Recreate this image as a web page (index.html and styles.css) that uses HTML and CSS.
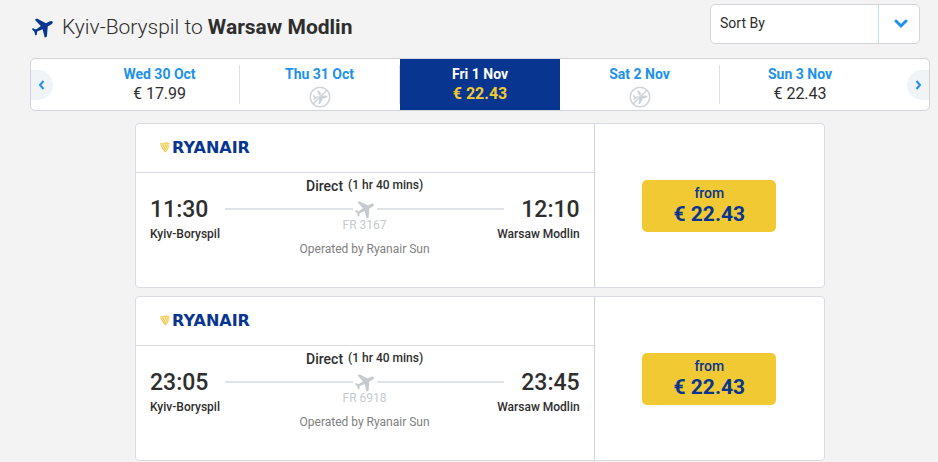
FILE: index.html
```html
<!DOCTYPE html>
<html lang="en">
<head>
    <meta charset="UTF-8">
    <meta name="viewport" content="width=device-width, initial-scale=1.0">
    <title>Kyiv-Boryspil to Warsaw Modlin</title>
    <link rel="stylesheet" href="styles.css">
</head>
<body>
    <svg width="0" height="0" class="sprite" aria-hidden="true">
        <symbol id="plane" viewBox="0 0 24 24">
            <path transform="rotate(61 12 12)" d="M12 0c-1.200 0-2 1.400-2 3v4.200L.8 13.300V16l9.200-2.400.7 6.400-2.800 2v1.800l4.100-1 4.100 1V22l-2.800-2 .7-6.400 9.200 2.400v-2.700L14 7.200V3C14 1.400 13.200 0 12 0z"/>
        </symbol>
        <symbol id="no-flight" viewBox="0 0 22 22">
            <circle cx="11" cy="11" r="9.800" fill="none" stroke="currentColor" stroke-width="1.500"/>
            <path transform="translate(4 4) scale(.6) rotate(85 12 12)" d="M12 0c-1.200 0-2 1.400-2 3v4.200L.8 13.300V16l9.200-2.400.7 6.400-2.800 2v1.800l4.100-1 4.100 1V22l-2.800-2 .7-6.400 9.200 2.400v-2.700L14 7.200V3C14 1.400 13.200 0 12 0z" fill="currentColor"/>
            <path d="M4 16.500 16.500 4" stroke="#fff" stroke-width="1"/>
            <path d="M4 18 18 4" stroke="currentColor" stroke-width="1.500"/>
        </symbol>
        <symbol id="harp" viewBox="0 0 10 11">
            <path d="M.2 1.500C2.500 2 4 .2 6 .5s2.400.3 3.800 1.200C9.800 4.500 7.800 8 5.400 10.700 3 8 .6 5 .2 1.500z" fill="#fae9a6"/>
            <path d="M.4 1.600C3 3 4 .8 6 1s2.200.3 3.500.9M.8 3.200l4.500 6.900 3-4.300M2.800 3.200l3 5.200M5 2.400l2.200 4M7.300 2.600l1 2" fill="none" stroke="#ebc03a" stroke-width=".9"/>
        </symbol>
    </svg>

    <main class="page">
        <header class="header">
            <h1 class="title">
                <svg class="title-icon"><use href="#plane"/></svg>
                <span>Kyiv-Boryspil to <strong>Warsaw Modlin</strong></span>
            </h1>
            <div class="sort">
                <select class="sort-select" aria-label="Sort By">
                    <option>Sort By</option>
                    <option>Price</option>
                    <option>Departure time</option>
                </select>
                <span class="sort-arrow">
                    <svg width="14" height="10" viewBox="0 0 14 10"><path d="M2 2l5 5 5-5" fill="none" stroke="currentColor" stroke-width="3" stroke-linecap="round"/></svg>
                </span>
            </div>
        </header>

        <nav class="dates">
            <button class="arrow prev" aria-label="Previous dates">
                <svg width="8" height="10" viewBox="0 0 8 10"><path d="M5.500 1L2 5l3.500 4" fill="none" stroke="currentColor" stroke-width="2"/></svg>
            </button>
            <button class="date"><span class="day">Wed 30 Oct</span><span class="fare">€ 17.99</span></button>
            <button class="date"><span class="day">Thu 31 Oct</span><svg class="no-flight"><use href="#no-flight"/></svg></button>
            <button class="date active"><span class="day">Fri 1 Nov</span><span class="fare">€ 22.43</span></button>
            <button class="date"><span class="day">Sat 2 Nov</span><svg class="no-flight"><use href="#no-flight"/></svg></button>
            <button class="date"><span class="day">Sun 3 Nov</span><span class="fare">€ 22.43</span></button>
            <button class="arrow next" aria-label="Next dates">
                <svg width="8" height="10" viewBox="0 0 8 10"><path d="M2.500 1L6 5 2.500 9" fill="none" stroke="currentColor" stroke-width="2"/></svg>
            </button>
        </nav>

        <section class="flights">
            <article class="flight">
                <div class="info">
                    <div class="carrier"><svg class="harp"><use href="#harp"/></svg><span>RYANAIR</span></div>
                    <div class="route">
                        <div class="stop">
                            <div class="time">11:30</div>
                            <div class="city">Kyiv-Boryspil</div>
                        </div>
                        <div class="path">
                            <div class="direct"><span>Direct</span> <span class="duration">(1 hr 40 mins)</span></div>
                            <div class="line"><svg class="line-icon"><use href="#plane"/></svg></div>
                            <div class="number">FR 3167</div>
                            <div class="operator">Operated by Ryanair Sun</div>
                        </div>
                        <div class="stop arrival">
                            <div class="time">12:10</div>
                            <div class="city">Warsaw Modlin</div>
                        </div>
                    </div>
                </div>
                <div class="buy">
                    <button class="price"><span class="from">from</span><span class="amount">€ 22.43</span></button>
                </div>
            </article>

            <article class="flight">
                <div class="info">
                    <div class="carrier"><svg class="harp"><use href="#harp"/></svg><span>RYANAIR</span></div>
                    <div class="route">
                        <div class="stop">
                            <div class="time">23:05</div>
                            <div class="city">Kyiv-Boryspil</div>
                        </div>
                        <div class="path">
                            <div class="direct"><span>Direct</span> <span class="duration">(1 hr 40 mins)</span></div>
                            <div class="line"><svg class="line-icon"><use href="#plane"/></svg></div>
                            <div class="number">FR 6918</div>
                            <div class="operator">Operated by Ryanair Sun</div>
                        </div>
                        <div class="stop arrival">
                            <div class="time">23:45</div>
                            <div class="city">Warsaw Modlin</div>
                        </div>
                    </div>
                </div>
                <div class="buy">
                    <button class="price"><span class="from">from</span><span class="amount">€ 22.43</span></button>
                </div>
            </article>
        </section>
    </main>
</body>
</html>
```

FILE: styles.css
```css
* {
    box-sizing: border-box;
}

body {
    margin: 0;
    background-color: #f3f3f3;
    color: #2e2e2e;
    font-family: Roboto, Arial, sans-serif;
}

button {
    border: 0;
    padding: 0;
    background: none;
    color: inherit;
    font-family: inherit;
    cursor: pointer;
}

svg {
    flex: none;
}

.sprite {
    display: block;
}

.page {
    padding: 4px 8px 0 30px;
}

/* header */
.header {
    display: flex;
    justify-content: space-between;
    padding: 0 10px 0 2px;
    margin-bottom: 14px;
}

.title {
    display: flex;
    align-items: center;
    gap: 8px;
    margin: 6px 0 0;
    height: 34px;
    font-size: 21px;
    font-weight: 300;
}

.title strong {
    font-weight: 700;
}

.title-icon {
    width: 22px;
    height: 22px;
    fill: #073590;
}

.sort {
    position: relative;
    width: 210px;
    height: 40px;
}

.sort-select {
    appearance: none;
    width: 100%;
    height: 100%;
    padding: 0 50px 2px 9px;
    border: 1px solid #d1d5d9;
    border-radius: 5px;
    background-color: #fff;
    color: #2e2e2e;
    font-family: inherit;
    font-size: 14px;
}

.sort-arrow {
    position: absolute;
    top: 1px;
    right: 1px;
    bottom: 1px;
    display: flex;
    align-items: center;
    justify-content: center;
    width: 41px;
    padding-left: 4px;
    border-left: 1px solid #c5e1f7;
    color: #2091eb;
    pointer-events: none;
}

/* date carousel */
.dates {
    display: grid;
    grid-template-columns: 49px repeat(5, 1fr) 49px;
    align-items: center;
    height: 53px;
    border: 1px solid #d1d5d9;
    border-radius: 5px;
    background-color: #fff;
}

.arrow {
    display: flex;
    align-items: center;
    justify-content: center;
    width: 22px;
    height: 30px;
    background-color: #f1f4f7;
    color: #2091eb;
}

.prev {
    border-radius: 0 15px 15px 0;
}

.next {
    justify-self: end;
    border-radius: 15px 0 0 15px;
}

.date {
    display: flex;
    flex-direction: column;
    align-items: center;
    height: 39px;
    border-right: 1px solid #dde0e3;
}

.date:nth-child(6) {
    border-right: 0;
}

.day {
    color: #2091eb;
    font-size: 14px;
    font-weight: 700;
    line-height: 18px;
}

.fare {
    font-size: 16px;
    line-height: 22px;
}

.no-flight {
    width: 22px;
    height: 22px;
    margin-top: 3px;
    color: #d0d3d6;
}

.active {
    align-self: stretch;
    height: auto;
    padding-top: 6px;
    border-right: 0;
    background-color: #073590;
}

.active .day {
    color: #fff;
}

.active .fare {
    color: #f1c933;
    font-weight: 700;
}

/* flight cards */
.flights {
    display: grid;
    gap: 8px;
    margin: 12px 105px 0;
}

.flight {
    display: grid;
    grid-template-columns: 2fr 1fr;
    min-height: 165px;
    border: 1px solid #d8dce2;
    border-radius: 4px;
    background-color: #fff;
}

.info {
    border-right: 1px solid #d0d4d9;
}

.carrier {
    display: flex;
    align-items: center;
    gap: 2px;
    height: 49px;
    padding: 0 24px 2px;
    border-bottom: 1px solid #d8dce2;
    color: #073590;
    font-family: "DejaVu Sans", sans-serif;
    font-size: 16px;
    font-weight: 700;
}

.harp {
    width: 10px;
    height: 11px;
}

.route {
    display: flex;
    justify-content: space-between;
    padding: 4px 14px 0;
}

.stop {
    padding-top: 19px;
}

.arrival {
    text-align: right;
}

.time {
    font-size: 23px;
    font-weight: 500;
    line-height: 28px;
}

.city {
    font-size: 12px;
    font-weight: 500;
    line-height: 20px;
}

.path {
    flex: 1;
    margin: 0 -7px 0 5px;
    text-align: center;
}

.direct {
    display: flex;
    justify-content: center;
    gap: 5px;
    font-size: 14px;
    font-weight: 500;
    line-height: 18px;
}

.duration {
    font-size: 12px;
    line-height: 16px;
}

.line {
    display: flex;
    align-items: center;
    gap: 2px;
    height: 20px;
    margin-top: 4px;
}

.line::before,
.line::after {
    content: "";
    flex: 1;
    height: 2px;
    background-color: #dfe2e7;
}

.line-icon {
    width: 20px;
    height: 20px;
    fill: #c6cace;
}

.number {
    color: #c6cace;
    font-size: 12px;
    line-height: 12px;
}

.operator {
    margin-top: 10px;
    color: #808080;
    font-size: 12px;
    line-height: 16px;
}

/* price */
.buy {
    display: flex;
    align-items: center;
    justify-content: center;
}

.price {
    display: flex;
    flex-direction: column;
    align-items: center;
    width: 134px;
    height: 52px;
    padding-top: 4px;
    border-radius: 5px;
    background-color: #f1c933;
    color: #073590;
    font-weight: 500;
}

.from {
    font-size: 14px;
    line-height: 18px;
}

.amount {
    font-size: 21px;
    font-weight: 700;
    line-height: 24px;
}
```
